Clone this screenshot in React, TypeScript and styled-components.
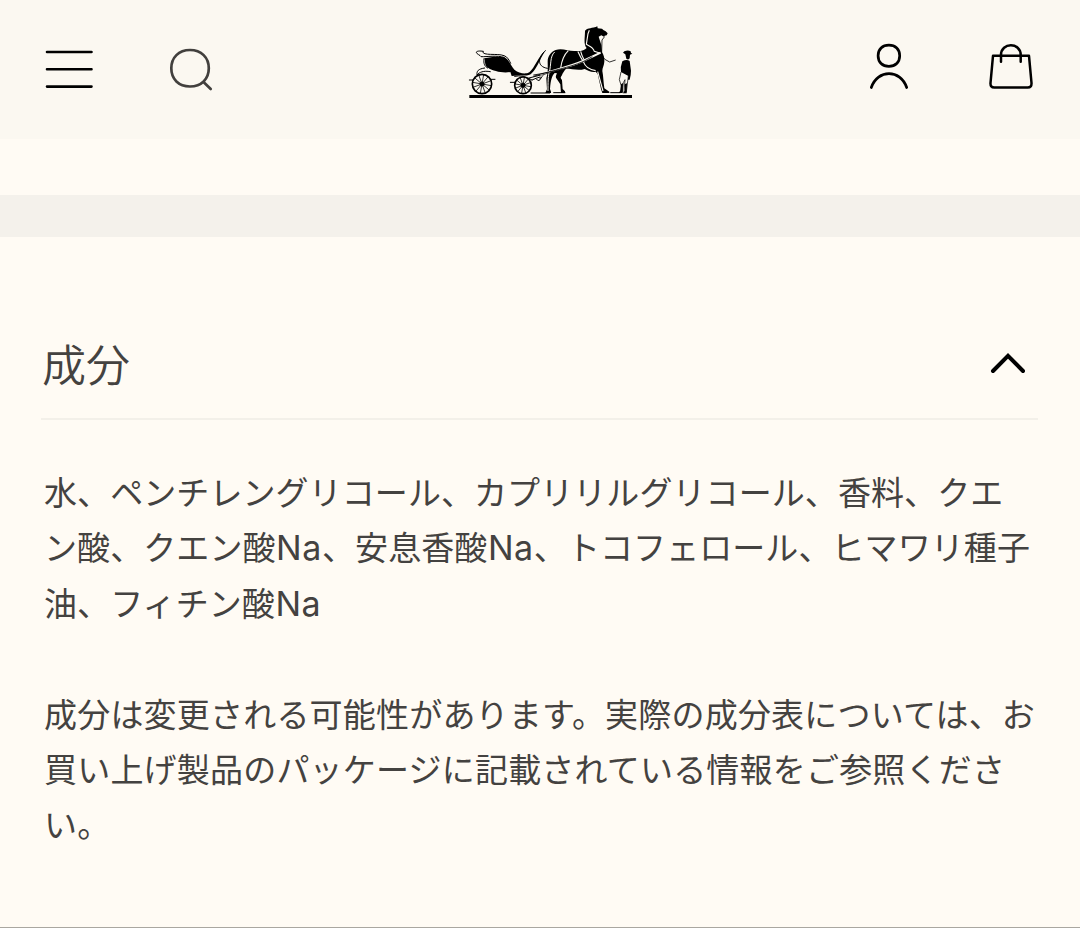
import React from "react";
import styled, { createGlobalStyle } from "styled-components";

const GlobalStyle = createGlobalStyle`
  *, *::before, *::after { box-sizing: border-box; }
  html, body { margin: 0; padding: 0; background: #fffbf4; }
  body { font-family: Inter, "Noto Sans CJK JP", sans-serif; color: #444240; }
  button { border: 0; padding: 0; background: none; color: inherit; font: inherit; }
  svg { display: block; }
`;

const Page = styled.div`
  display: flex;
  flex-direction: column;
  height: 928px;
  overflow: hidden;
  background: #fffbf4;
  border-bottom: 1px solid #aaa7a0;
`;

const Header = styled.header`
  flex: none;
  display: grid;
  grid-template-columns: 1fr 180px 1fr;
  height: 139px;
  padding: 20px 44px 0;
  background: #fbf8f1;
`;

const Actions = styled.nav<{ $end?: boolean }>`
  display: flex;
  align-items: flex-start;
  gap: 72px;
  padding-top: 20px;
  justify-content: ${(p) => (p.$end ? "flex-end" : "flex-start")};
`;

const IconButton = styled.button`
  width: 50px;
  height: 60px;
`;

const Logo = styled.a`
  width: 180px;
  height: 85px;
  margin-left: 10px;
`;

const Divider = styled.div`
  flex: none;
  height: 42px;
  margin-top: 56px;
  background: #f4f1eb;
`;

const Section = styled.section`
  padding: 82px 42px 0 41px;
`;

const SectionHeader = styled.div`
  display: flex;
  justify-content: space-between;
  align-items: center;
  height: 101px;
  padding: 0 12px 11px 1px;
  border-bottom: 2px solid #f3f0e9;
`;

const Title = styled.h2`
  margin: 0;
  padding-top: 6px;
  font-size: 44px;
  line-height: 66px;
  font-weight: 350;
`;

const Copy = styled.div`
  padding: 46px 0 0 3px;
  font-size: 33px;
  line-height: 55.4px;
  white-space: nowrap;
`;

const Paragraph = styled.p<{ $tracking: number }>`
  margin: 0 0 55.4px;
  letter-spacing: ${(p) => p.$tracking}px;
`;

const Latin = styled.span`
  font-size: 34px;
  line-height: 1;
  letter-spacing: 0.6px;
  margin-left: 0.5px;
`;

const MenuIcon = () => (
  <svg width="50" height="60" viewBox="44 40 50 60" fill="none" stroke="#000" strokeWidth="2.6" strokeLinecap="round">
    <path d="M47 52H91.500M47 69.300H91.500M47 86.600H91.500" />
  </svg>
);

const SearchIcon = () => (
  <svg width="50" height="60" viewBox="166 40 50 60" fill="none" stroke="#42403e" strokeWidth="2.7" strokeLinecap="round">
    <path d="M190 50C201.300 50 208.800 57.500 208.800 68.300S201.300 86.500 190 86.500S171.300 79.100 171.300 68.300S178.700 50 190 50ZM203.500 82L210.700 89" />
  </svg>
);

const AccountIcon = () => (
  <svg width="50" height="60" viewBox="864 40 50 60" fill="none" stroke="#000" strokeWidth="2.7" strokeLinecap="round">
    <path d="M888.900 45.200C895.400 45.200 899.700 49.300 899.700 55.800S895.400 66.400 888.900 66.400S878.100 62.300 878.100 55.800S882.400 45.200 888.900 45.200Z" />
    <path d="M871.300 87.500C877.500 69 900.500 69 906.700 87.500" />
  </svg>
);

const BagIcon = () => (
  <svg width="50" height="60" viewBox="986 40 50 60" fill="none" stroke="#000" strokeWidth="2.5" strokeLinecap="round" strokeLinejoin="round">
    <path d="M993 55.800H1029L1031.500 83Q1031.800 87.500 1027.700 87.500H994.300Q990.200 87.500 990.500 83Z" />
    <path d="M1001 61.800V55C1001 42 1020.700 42 1020.700 55V61.800" />
  </svg>
);

const ChevronUp = () => (
  <svg width="36" height="26" viewBox="990 350 36 26" fill="none" stroke="#000" strokeWidth="4" strokeLinecap="round">
    <path d="M993 371L1008 355.800L1023 371" />
  </svg>
);

const Wheel = ({ x, y, r }: { x: number; y: number; r: number }) => (
  <g transform={`translate(${x} ${y})`} fill="none" stroke="#000">
    <circle r={r} strokeWidth="5" />
    {[0, 30, 60, 90, 120, 150].map((a) => (
      <path key={a} d={`M${-r} 0H${r}`} transform={`rotate(${a + 10})`} strokeWidth="2.2" />
    ))}
    <circle r="7" fill="#000" />
  </g>
);

const CarriageLogo = () => (
  <svg width="180" height="85" viewBox="0 0 540 255" role="img" aria-label="Hermès">
    <rect x="28" y="225" width="488" height="9" />
    <Wheel x={66} y={192} r={29} />
    <Wheel x={189} y={196} r={25} />
    <path d="M73 115C92 110 117 109 134 112C148 120 153 140 164 150C177 160 196 164 208 157C224 144 234 110 258 91C242 110 233 143 215 160C205 170 190 166 182 166L155 168L151 156C127 160 100 153 85 144C72 137 77 126 73 115Z" />
    <g fill="none" stroke="#000" strokeWidth="3" strokeLinecap="round">
      <path d="M70 94C60 92 49 93 49 97C50 103 61 105 63 110C80 111 111 105 132 112M68 95C67 109 112 99 132 107C143 110 148 122 152 130" />
      <path d="M72 116C70 132 74 139 83 144M74 144C54 147 50 153 51 165C58 157 70 151 91 155M28 180H40M91 178H105M151 187H164M164 169Q189 163 216 180" />
      <path d="M207 174L270 158M216 180Q229 174 240 171M228 176Q238 190 244 172M213 219H269M281 218H315M452 218H480" />
      <path d="M256 92C234 111 229 140 262 145" />
    </g>
    <path d="M375 32C381 25 390 25 407 21L412 19L413 25L426 26L430 30L437 34L443 40L440 46L434 47L433 51L424 46L416 50L424 75L426 96C431 105 434 113 433 125C432 137 427 143 427 153C430 167 430 185 433 205L448 215V219H427L423 207L413 162L407 155C396 158 384 152 374 147C356 153 334 147 320 145C313 151 309 159 305 167C301 171 301 174 306 180L308 207L315 214V219H303L301 193L290 176C285 172 289 164 291 160L284 159C277 166 272 178 270 207L273 215V219H256L261 208L259 175C265 157 263 140 263 125C263 108 273 96 287 90C306 83 326 94 345 93C363 95 374 90 380 84C370 71 375 54 375 32Z" />
    <path d="M284 96C269 109 274 137 268 155C264 167 264 190 264 213" fill="none" stroke="#fbf8f1" strokeWidth="3" />
    <path d="M388 31L384 41L379 73C387 78 399 80 403 94L419 99M354 95Q361 111 370 125C375 139 386 149 407 152M362 94Q366 109 373 121M325 92Q307 109 302 144M413 155L429 213" fill="none" stroke="#fbf8f1" strokeWidth="3.4" />
    <path d="M240 163C277 151 327 142 369 123L422 98" fill="none" stroke="#fbf8f1" strokeWidth="6" />
    <path d="M220 169C277 151 327 143 369 125L397 110M424 106Q434 121 449 126L467 120M433 51L426 60L425 96" fill="none" stroke="#000" strokeWidth="2.4" />
    <path d="M220 165C267 158 302 148 331 143M238 177C244 174 247 168 251 164" fill="none" stroke="#000" strokeWidth="2.5" />
    <path d="M489 98L493 94Q504 89 512 94L513 99L517 101L510 104L509 115Q505 121 499 116L496 103Z" />
    <path d="M487 124Q500 117 509 123L513 152Q513 166 509 179L503 179L502 168L483 158Q480 141 487 124Z" />
    <path d="M483 156L478 179L484 198L481 216H487L490 188L495 179L492 216H499L505 168" fill="#fbf8f1" stroke="#000" strokeWidth="2.2" />
    <path d="M483 193L489 189L488 219H476L482 211ZM495 192L501 190L500 220H488L494 213Z" />
  </svg>
);

export default function App() {
  return (
    <>
      <GlobalStyle />
      <Page>
        <Header>
          <Actions>
            <IconButton aria-label="メニュー"><MenuIcon /></IconButton>
            <IconButton aria-label="検索"><SearchIcon /></IconButton>
          </Actions>
          <Logo><CarriageLogo /></Logo>
          <Actions $end>
            <IconButton aria-label="アカウント"><AccountIcon /></IconButton>
            <IconButton aria-label="バッグ"><BagIcon /></IconButton>
          </Actions>
        </Header>
        <Divider />
        <Section>
          <SectionHeader>
            <Title>成分</Title>
            <ChevronUp />
          </SectionHeader>
          <Copy>
            <Paragraph $tracking={0.08}>
              水、ペンチレングリコール、カプリリルグリコール、香料、クエ
              <br />
              ン酸、クエン酸<Latin>Na</Latin>、安息香酸<Latin>Na</Latin>、トコフェロール、ヒマワリ種子
              <br />
              油、フィチン酸<Latin>Na</Latin>
            </Paragraph>
            <Paragraph $tracking={0.2}>
              成分は変更される可能性があります。実際の成分表については、お
              <br />
              買い上げ製品のパッケージに記載されている情報をご参照くださ
              <br />
              い。
            </Paragraph>
          </Copy>
        </Section>
      </Page>
    </>
  );
}
